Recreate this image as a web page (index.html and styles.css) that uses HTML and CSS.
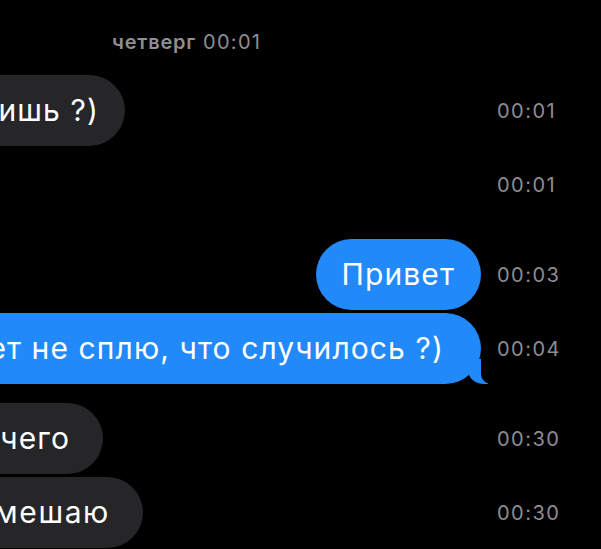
FILE: index.html
```html
<!DOCTYPE html>
<html>
    <head>
        <title>Сообщения</title>
        <link rel="stylesheet" href="styles.css">
    </head>
    <body>
        <div class="chat">
            <div class="day"><b>четверг</b> 00:01</div>

            <div class="row">
                <div class="lane">
                    <div class="bubble in w1"><span>Не спишь ?)</span></div>
                </div>
                <div class="time">00:01</div>
            </div>

            <div class="row">
                <div class="lane"></div>
                <div class="time">00:01</div>
            </div>

            <div class="row group">
                <div class="lane out">
                    <div class="bubble me"><span>Привет</span></div>
                </div>
                <div class="time">00:03</div>
            </div>

            <div class="row">
                <div class="lane out">
                    <div class="bubble me tail"><span>Нет не сплю, что случилось ?)</span></div>
                </div>
                <div class="time">00:04</div>
            </div>

            <div class="row group">
                <div class="lane">
                    <div class="bubble in w2"><span>Да ничего</span></div>
                </div>
                <div class="time">00:30</div>
            </div>

            <div class="row">
                <div class="lane">
                    <div class="bubble in w3"><span>Не мешаю</span></div>
                </div>
                <div class="time">00:30</div>
            </div>
        </div>
    </body>
</html>
```

FILE: styles.css
```css
body {
    margin: 0;
    background-color: #000;
    font-family: "Inter", "Noto Sans", sans-serif;
    overflow: hidden;
}

.chat {
    width: 601px;
    height: 549px;
    overflow: hidden;
}

.day {
    padding: 31px 0 0 112px;
    height: 43px;
    box-sizing: border-box;
    font-size: 20px;
    line-height: 22px;
    letter-spacing: 1.3px;
    color: #8e8e93;
}

.day b {
    font-weight: 600;
    letter-spacing: 0.8px;
}

.row {
    display: flex;
    align-items: center;
    height: 71px;
    margin-top: 3px;
}

.day + .row {
    margin-top: 32px;
}

.row.group {
    margin-top: 19px;
}

.lane {
    flex: 1;
    display: flex;
    min-width: 0;
}

.lane.out {
    justify-content: flex-end;
    padding-right: 16px;
}

.time {
    width: 104px;
    padding-top: 1px;
    font-size: 20px;
    letter-spacing: 1.5px;
    color: #8d8d92;
}

.bubble {
    position: relative;
    display: flex;
    justify-content: flex-end;
    flex-shrink: 0;
    height: 71px;
    box-sizing: border-box;
    padding: 17px 26px;
    border-radius: 36px;
    font-size: 30px;
    line-height: 37px;
    letter-spacing: 1.1px;
    color: #fff;
    white-space: nowrap;
}

.bubble.in {
    background-color: #262629;
    border-radius: 0 36px 36px 0;
}

.bubble.me {
    background-color: #2189f9;
}

.bubble.tail {
    padding-right: 37px;
}

.bubble.tail::before {
    content: "";
    position: absolute;
    bottom: 0;
    right: -7px;
    width: 20px;
    height: 25px;
    background-color: #2189f9;
    border-bottom-left-radius: 16px 14px;
}

.bubble.tail::after {
    content: "";
    position: absolute;
    bottom: 0;
    right: -16px;
    width: 16px;
    height: 25px;
    background-color: #000;
    border-bottom-left-radius: 10px;
}

.w1 {
    width: 125px;
}

.w2 {
    width: 103px;
    padding-right: 33px;
}

.w3 {
    width: 143px;
    padding-right: 33px;
    letter-spacing: 1.6px;
}
```
